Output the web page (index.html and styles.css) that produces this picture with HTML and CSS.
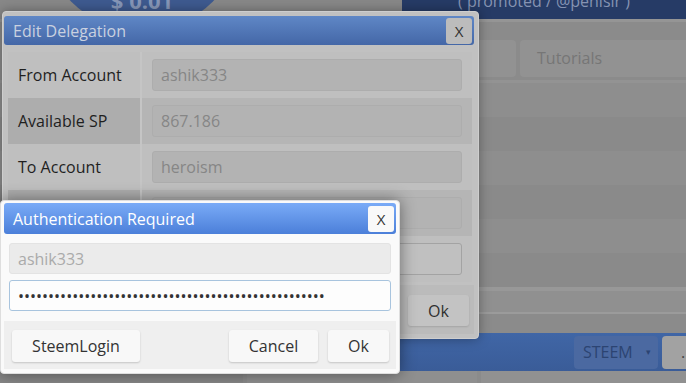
FILE: index.html
```html
<!DOCTYPE html>
<html>
<head>
    <title>Edit Delegation</title>
    <link rel="stylesheet" href="styles.css">
</head>
<body>

    <div class="page">
        <div class="top">
            <div class="price-area">
                <div class="price-bubble">$ 0.01</div>
            </div>
            <div class="promo"><span>( promoted / @penisir )</span></div>
        </div>
        <div class="top-rule"></div>

        <div class="tabs">
            <div class="tab"></div>
            <div class="tab">Tutorials</div>
        </div>

        <div class="feed">
            <div class="feed-row"></div>
            <div class="feed-row"></div>
            <div class="feed-row"></div>
            <div class="feed-row"></div>
            <div class="feed-row"></div>
            <div class="feed-row"></div>
        </div>
        <div class="feed-end"></div>

        <div class="toolbar">
            <button class="currency">STEEM <span class="caret">&#9662;</span></button>
            <button class="more">...</button>
        </div>
        <div class="bottom">
            <div class="bottom-cell"></div>
            <div class="bottom-cell"></div>
            <div class="bottom-cell"></div>
        </div>
    </div>

    <div class="dialog edit">
        <div class="titlebar">
            <span>Edit Delegation</span>
            <button class="close">X</button>
        </div>
        <table class="form">
            <tr>
                <td class="label">From Account</td>
                <td class="value"><input class="field" type="text" value="ashik333" readonly></td>
            </tr>
            <tr class="striped">
                <td class="label">Available SP</td>
                <td class="value"><input class="field" type="text" value="867.186" readonly></td>
            </tr>
            <tr>
                <td class="label">To Account</td>
                <td class="value"><input class="field" type="text" value="heroism" readonly></td>
            </tr>
            <tr class="striped">
                <td class="label"></td>
                <td class="value"><input class="field" type="text" value="" readonly></td>
            </tr>
            <tr>
                <td class="label"></td>
                <td class="value"><input class="field editable" type="text" value=""></td>
            </tr>
        </table>
        <div class="edit-foot">
            <button class="btn">Ok</button>
        </div>
    </div>

    <div class="dialog auth">
        <div class="titlebar">
            <span>Authentication Required</span>
            <button class="close">X</button>
        </div>
        <div class="auth-body">
            <input class="auth-field user" type="text" value="ashik333" readonly>
            <input class="auth-field pass" type="password" value="5KJxxxxxxxxxxxxxxxxxxxxxxxxxxxxxxxxxxxxxxxxxxxxxxxx" autofocus>
        </div>
        <div class="auth-foot">
            <button class="btn login">SteemLogin</button>
            <button class="btn cancel">Cancel</button>
            <button class="btn ok">Ok</button>
        </div>
    </div>

</body>
</html>
```

FILE: styles.css
```css
body {
    margin: 0;
    width: 686px;
    height: 383px;
    overflow: hidden;
    position: relative;
    font-family: 'Open Sans', sans-serif;
    font-size: 16px;
    background-color: #8b8b8b;
    color: #333;
}

button {
    font-family: 'Open Sans', sans-serif;
    font-size: 16px;
    border: none;
    padding: 0;
}

/* dimmed page behind the dialogs */
.page {
    display: flex;
    flex-direction: column;
}

.top {
    display: flex;
    height: 19px;
}

.price-area {
    flex: 0 0 402px;
    overflow: hidden;
    background-color: #888;
}

.price-bubble {
    box-sizing: border-box;
    width: 200px;
    height: 200px;
    margin: -169px 0 0 42px;
    padding-bottom: 20px;
    border-radius: 50%;
    background-color: #3e5a90;
    color: #8797b8;
    font-size: 22px;
    font-weight: bold;
    line-height: 1;
    display: flex;
    align-items: flex-end;
    justify-content: center;
}

.promo {
    flex: 1;
    overflow: hidden;
    background-color: #263b66;
    color: #8593b2;
    text-align: center;
}

.promo span {
    display: block;
    margin-top: -11px;
    line-height: 24px;
}

.top-rule {
    height: 3px;
    background-color: #959595;
}

.tabs {
    display: flex;
    gap: 4px;
    margin: 18px 0 0 390px;
    height: 37px;
}

.tab {
    flex: 0 0 126px;
    background-color: #929292;
    border-radius: 4px;
    color: #767676;
    line-height: 37px;
    padding-left: 17px;
    box-sizing: border-box;
}

.tab + .tab {
    flex-basis: 180px;
}

.feed {
    margin-top: 3px;
    border-top: 3px solid #939393;
}

.feed-row {
    height: 34px;
    background-color: #8e8e8e;
}

.feed-row:nth-child(even) {
    background-color: #8a8a8a;
}

.feed-end {
    height: 21px;
    border-top: 4px solid #989898;
    border-bottom: 2px solid #9b9b9b;
    background-color: #909090;
    margin-bottom: 19px;
}

.toolbar {
    height: 38px;
    display: flex;
    justify-content: flex-end;
    align-items: center;
    gap: 4px;
    background: linear-gradient(#4066a6, #3a5c98);
    overflow: hidden;
}

.currency {
    width: 84px;
    height: 33px;
    border-radius: 4px;
    background-color: #4b69a1;
    color: #2c4472;
    text-align: left;
    padding-left: 9px;
}

.currency .caret {
    font-size: 9px;
    margin-left: 9px;
    vertical-align: 3px;
}

.more {
    width: 30px;
    height: 33px;
    margin-right: -6px;
    border-radius: 4px;
    background-color: #a2a2a2;
    color: #444;
    text-align: left;
    padding-left: 19px;
}

.bottom {
    display: flex;
    height: 16px;
    gap: 4px;
}

.bottom-cell {
    width: 243px;
    background-color: #878787;
}

.bottom-cell:nth-child(2) {
    width: 230px;
    background-color: #8f8f8f;
}

.bottom-cell:nth-child(3) {
    flex: 1;
    background-color: #919191;
}

/* dialogs */
.dialog {
    position: absolute;
    box-sizing: border-box;
    border-radius: 4px;
}

.titlebar {
    display: flex;
    align-items: center;
    justify-content: space-between;
    padding-left: 9px;
    border-radius: 3px;
}

.close {
    width: 26px;
    height: 26px;
    margin-right: 2px;
    border-radius: 3px;
    font-size: 15px;
}

.btn {
    height: 32px;
    border-radius: 3px;
}

.edit {
    left: 2px;
    top: 11px;
    width: 477px;
    height: 328px;
    padding: 4px 4px 4px 1px;
    border: 1px solid #cecece;
    background-color: #c1c1c1;
    box-shadow: 0 0 12px rgba(0, 0, 0, 0.35);
}

.edit .titlebar {
    height: 29px;
    background: linear-gradient(#5f87c6, #4467a7);
    color: #c9d1e0;
}

.edit .close {
    background-color: #bcbcbc;
    color: #2f2f2f;
}

.form {
    width: 464px;
    margin: 7px 0 0 4px;
    border-collapse: collapse;
    color: #1f1f1f;
}

.form td {
    height: 46px;
    padding: 0 10px;
    box-sizing: border-box;
    background-color: #bfbfbf;
}

.form .label {
    width: 134px;
}

.form .value {
    border-left: 2px solid #c5c5c5;
}

.form .striped .label {
    background-color: #adadad;
}

.form .striped .value {
    background-color: #b5b5b5;
}

.field {
    display: block;
    box-sizing: border-box;
    width: 310px;
    height: 32px;
    padding: 0 8px;
    border: 1px solid #adadad;
    border-radius: 3px;
    background-color: #b3b3b3;
    color: #868686;
    font-family: 'Open Sans', sans-serif;
    font-size: 16px;
}

.field.editable {
    background-color: #c0c0c0;
    border-color: #a3a3a3;
}

.edit-foot {
    height: 49px;
    margin-top: 3px;
    padding: 10px 5px 0 0;
    box-sizing: border-box;
    display: flex;
    justify-content: flex-end;
    background-color: #bbbbbb;
}

.edit-foot .btn {
    width: 61px;
    height: 31px;
    background-color: #c3c3c3;
    color: #2f2f2f;
    box-shadow: 0 1px 2px rgba(0, 0, 0, 0.12);
}

.auth {
    left: 0;
    top: 200px;
    width: 400px;
    height: 174px;
    padding: 2px 3px 3px;
    border: 1px solid #dedede;
    background-color: #fafafa;
    box-shadow: 0 0 16px rgba(0, 0, 0, 0.45);
}

.auth .titlebar {
    height: 31px;
    background: linear-gradient(#7aabf7, #4b7fd9);
    color: #fff;
}

.auth .close {
    background-color: #f9f9f9;
    color: #333;
}

.auth-body {
    display: flex;
    flex-direction: column;
    gap: 6px;
    padding: 9px 5px 10px;
}

.auth-field {
    box-sizing: border-box;
    width: 382px;
    height: 31px;
    padding: 0 8px;
    border: 1px solid #e3e3e3;
    border-radius: 3px;
    font-family: 'Open Sans', sans-serif;
    font-size: 16px;
}

.auth-field.user {
    background-color: #ebebeb;
    color: #aaa;
}

.auth-field.pass {
    background-color: #fdfdfd;
    border-color: #a8c4de;
    color: #333;
    caret-color: #333;
    outline: none;
}

.auth-foot {
    box-sizing: border-box;
    height: 48px;
    padding: 9px 7px 7px 8px;
    display: flex;
    gap: 10px;
    background-color: #efefef;
}

.auth-foot .btn {
    background-color: #f8f8f8;
    color: #333;
    box-shadow: 0 1px 2px rgba(0, 0, 0, 0.18);
}

.auth-foot .login {
    width: 128px;
}

.auth-foot .cancel {
    width: 89px;
    margin-left: auto;
}

.auth-foot .ok {
    width: 61px;
}
```
